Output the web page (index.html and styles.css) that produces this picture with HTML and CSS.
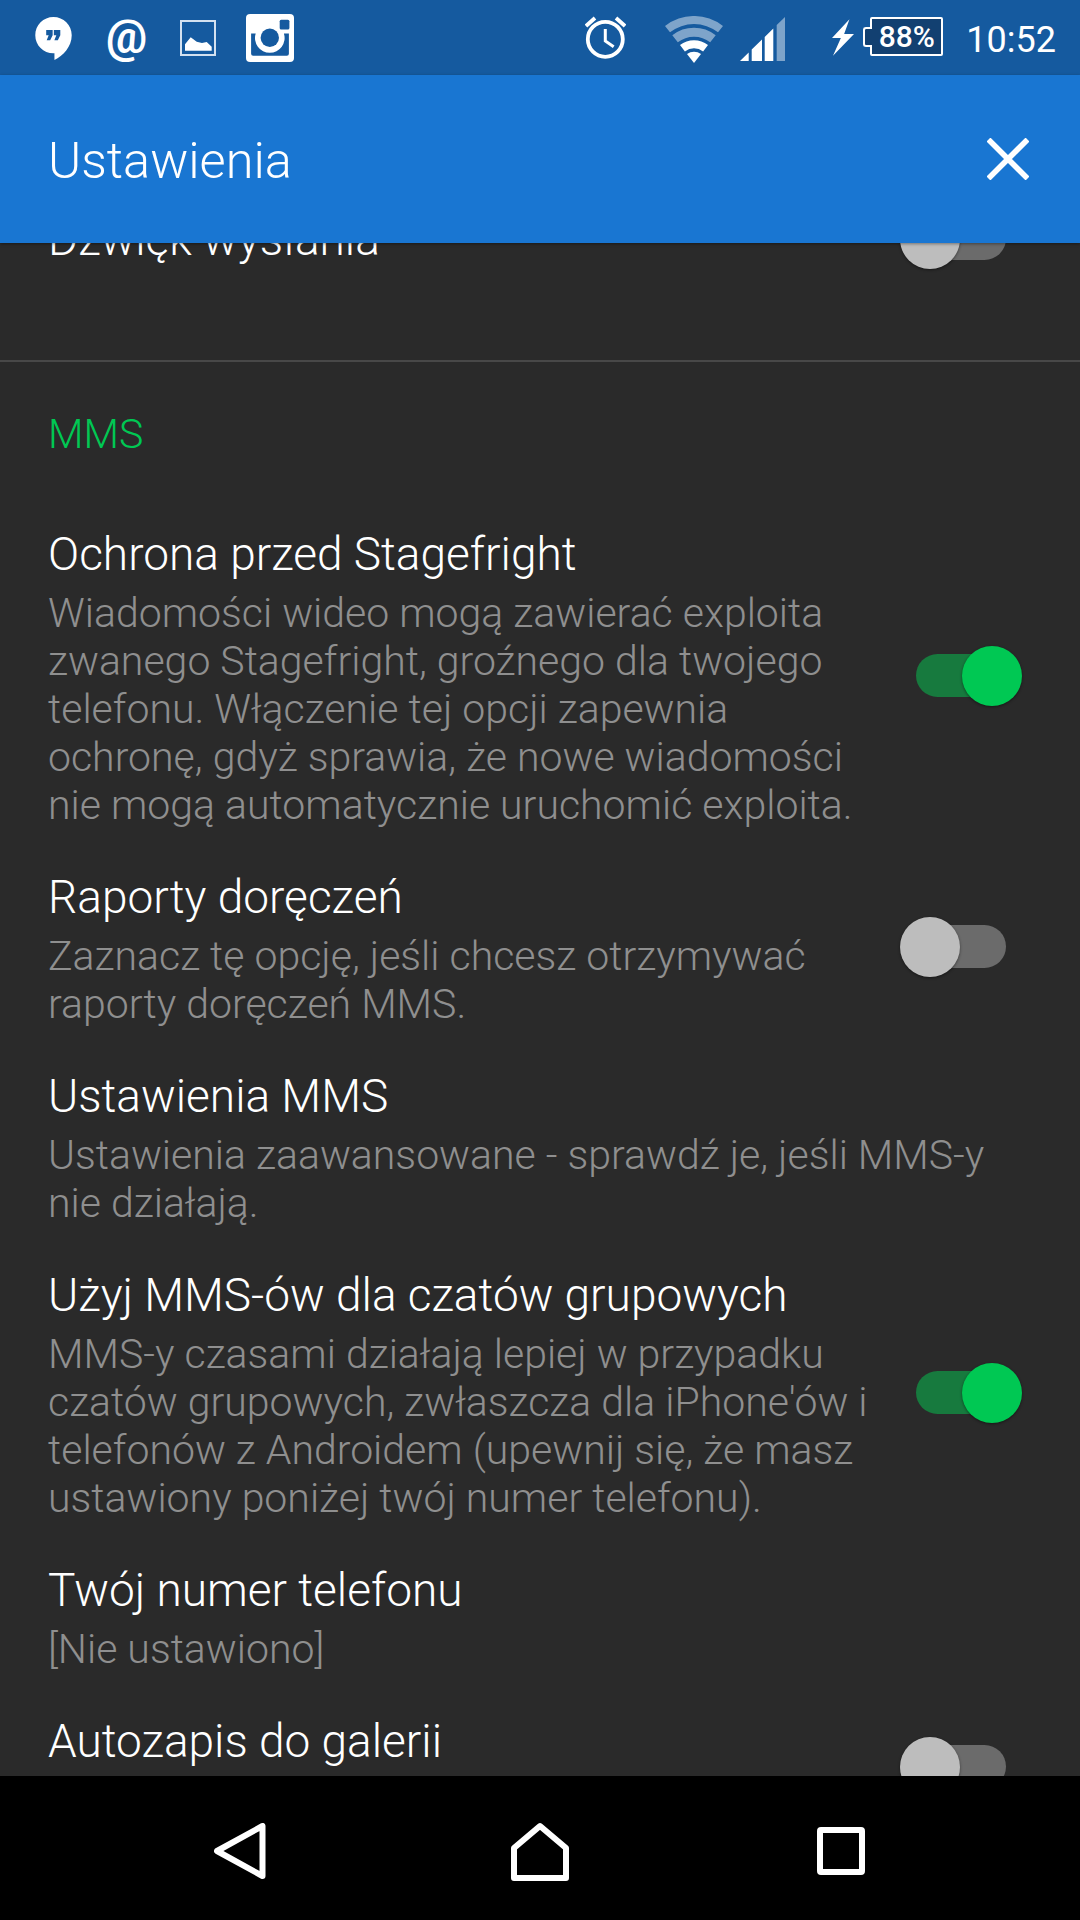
FILE: index.html
```html
<!DOCTYPE html>
<html lang="pl">
<head>
<meta charset="utf-8">
<title>Ustawienia</title>
<link rel="stylesheet" href="styles.css">
</head>
<body>
<div class="screen">
  <header class="status">
    <div class="status-left">
      <svg class="ic-hangouts" viewBox="0 0 36.700 43.300"><path fill="#fff" d="M18.300 0C8.200 0 0 8.200 0 18.300s8.200 18.300 18.300 18.300h1v6.700c8.500-4.200 17.400-13.300 17.400-25C36.700 8.200 28.400 0 18.300 0z"/><path fill="#155a9f" d="M11 13h6.500v5.500l-2.500 5h-3.500l2-5H11zM18.700 13h6.500v5.500l-2.500 5h-3.500l2-5h-2.500z"/></svg>
      <span class="ic-at">@</span>
      <svg class="ic-image" viewBox="0 0 36 36"><rect x="1" y="1" width="34" height="34" fill="none" stroke="#d3e1f0" stroke-width="2"/><path fill="#fff" d="M5 24.300l5.700-7 6 4.400 5.300 1.300 4.700-1 5 4.700v4H5z"/></svg>
      <svg class="ic-insta" viewBox="0 0 47 47"><rect width="47" height="47" rx="4" fill="#fff"/><path fill="#155a9f" d="M5 19H9.500A14.500 14.500 0 1 0 37.100 19H42V39a2 2 0 0 1-2 2H7a2 2 0 0 1-2-2z"/><circle cx="23.300" cy="23.300" r="9" fill="#155a9f"/><rect x="33" y="5.700" width="9.500" height="9.500" rx="1.500" fill="#155a9f"/></svg>
    </div>
    <div class="status-right">
      <svg class="ic-alarm" viewBox="0 0 41 43"><circle cx="20.300" cy="23.300" r="17.500" fill="none" stroke="#fff" stroke-width="3.800"/><path d="M20.300 13v12l8.400 5.700" fill="none" stroke="#fff" stroke-width="3"/><path d="M1 10l9-8M31 2l9 8" stroke="#fff" stroke-width="3.800"/></svg>
      <svg class="ic-wifi" viewBox="0 0 58 47"><g fill="#fff" fill-opacity=".45"><path d="M0 10A47 47 0 0 1 58 10L53 16.300A39 39 0 0 0 5 16.300z"/><path d="M7.300 19.200A35.300 35.300 0 0 1 50.700 19.200L45.200 26.300A26.300 26.300 0 0 0 12.800 26.300z"/></g><path fill="#fff" d="M15 29.100A22.700 22.700 0 0 1 43 29.100L38.100 35.400A14.700 14.700 0 0 0 19.900 35.400z"/><path fill="#fff" d="M22 38.100A11.300 11.300 0 0 1 36 38.100L29 47z"/></svg>
      <svg class="ic-signal" viewBox="0 0 45 44"><path fill="#fff" fill-opacity=".45" d="M36.700 8.100L45 0v44h-8.300z"/><path fill="#fff" d="M0 44l8.700-8.500V44zM11.700 32.600L22 22.500V44H11.700zM24.700 19.900l8.600-8.500V44h-8.600z"/></svg>
      <svg class="ic-bolt" viewBox="0 0 22.300 37"><path fill="#fff" d="M17.700 0L0 19h9L1 37 22.300 15h-10z"/></svg>
      <div class="battery"><span class="battery-cap"></span><span class="battery-body">88%</span></div>
      <span class="clock">10:52</span>
    </div>
  </header>
  <div class="appbar">
    <h1 class="appbar-title">Ustawienia</h1>
    <svg class="ic-close" viewBox="0 0 42 42"><path d="M1.500 1.500l39 39M40.500 1.500l-39 39" stroke="#fff" stroke-width="5.500"/></svg>
  </div>
  <main class="list">
    <div class="row row-clip">
      <div class="row-text"><div class="row-title">Dźwięk wysłania</div></div>
      <div class="toggle"><span class="track"></span><span class="thumb"></span></div>
    </div>
    <div class="divider"></div>
    <div class="section">MMS</div>
    <div class="row row-first">
      <div class="row-text">
        <div class="row-title">Ochrona przed Stagefright</div>
        <div class="row-sub">Wiadomości wideo mogą zawierać exploita<br>zwanego Stagefright, groźnego dla twojego<br>telefonu. Włączenie tej opcji zapewnia<br>ochronę, gdyż sprawia, że nowe wiadomości<br>nie mogą automatycznie uruchomić exploita.</div>
      </div>
      <div class="toggle on"><span class="track"></span><span class="thumb"></span></div>
    </div>
    <div class="row">
      <div class="row-text">
        <div class="row-title">Raporty doręczeń</div>
        <div class="row-sub">Zaznacz tę opcję, jeśli chcesz otrzymywać<br>raporty doręczeń MMS.</div>
      </div>
      <div class="toggle"><span class="track"></span><span class="thumb"></span></div>
    </div>
    <div class="row">
      <div class="row-text">
        <div class="row-title">Ustawienia MMS</div>
        <div class="row-sub">Ustawienia zaawansowane - sprawdź je, jeśli MMS-y<br>nie działają.</div>
      </div>
    </div>
    <div class="row">
      <div class="row-text">
        <div class="row-title">Użyj MMS-ów dla czatów grupowych</div>
        <div class="row-sub">MMS-y czasami działają lepiej w przypadku<br>czatów grupowych, zwłaszcza dla iPhone'ów i<br>telefonów z Androidem (upewnij się, że masz<br>ustawiony poniżej twój numer telefonu).</div>
      </div>
      <div class="toggle on"><span class="track"></span><span class="thumb"></span></div>
    </div>
    <div class="row">
      <div class="row-text">
        <div class="row-title">Twój numer telefonu</div>
        <div class="row-sub">[Nie ustawiono]</div>
      </div>
    </div>
    <div class="row">
      <div class="row-text">
        <div class="row-title">Autozapis do galerii</div>
        <div class="row-sub">&nbsp;</div>
      </div>
      <div class="toggle"><span class="track"></span><span class="thumb"></span></div>
    </div>
  </main>
  <nav class="navbar">
    <svg class="ic-back" viewBox="0 0 52 56"><path d="M48.500 3V53L3 28z" fill="none" stroke="#fff" stroke-width="6" stroke-linejoin="round"/></svg>
    <svg class="ic-home" viewBox="0 0 58 59"><path d="M3 56V26L29 4l26 22v30z" fill="none" stroke="#fff" stroke-width="6" stroke-linejoin="round"/></svg>
    <svg class="ic-recents" viewBox="0 0 48 48"><rect x="3" y="3" width="42" height="42" rx="1" fill="none" stroke="#fff" stroke-width="6"/></svg>
  </nav>
</div>
</body>
</html>
```
FILE: styles.css
```css
* { box-sizing: border-box; }
html, body { margin: 0; padding: 0; }
body { width: 1080px; height: 1920px; overflow: hidden; background: #000; font-family: Roboto, sans-serif; }
.screen { width: 1080px; height: 1920px; display: flex; flex-direction: column; }

.status { height: 75px; flex: none; background: #155a9f; display: flex; justify-content: space-between; align-items: center; color: #fff; }
.status-left, .status-right { display: flex; align-items: center; }
.status-left { padding-left: 35px; }
.status-right { padding-right: 24px; }
.status svg { display: block; flex: none; }
.ic-hangouts { width: 37px; height: 43px; margin-top: 2px; }
.ic-at { width: 39px; margin-left: 34px; margin-bottom: 2px; font-size: 46px; line-height: 44px; font-weight: 700; text-align: center; }
.ic-image { width: 36px; height: 36px; margin-left: 35px; }
.ic-insta { width: 48px; height: 48px; margin-left: 30px; }
.ic-alarm { width: 41px; height: 43px; }
.ic-wifi { width: 58px; height: 47px; margin-left: 39px; margin-top: 4px; }
.ic-signal { width: 45px; height: 44px; margin-left: 17px; margin-top: 3px; }
.ic-bolt { width: 22px; height: 37px; margin-left: 47px; margin-top: -1px; }
.battery { display: flex; align-items: center; margin-left: 9px; height: 39px; margin-top: -2px; }
.battery-cap { width: 9px; height: 20px; border: 2px solid #fff; border-right: 0; border-radius: 3px 0 0 3px; background: #124071; margin-right: -2px; position: relative; z-index: 1; }
.battery-body { width: 73px; height: 39px; border: 2px solid #fff; border-radius: 2px; background: #124071; font-size: 30px; line-height: 35px; font-weight: 500; text-align: center; }
.clock { margin-left: 23px; font-size: 36px; line-height: 40px; margin-top: 4px; }

.appbar { height: 168px; flex: none; background: #1976d2; display: flex; align-items: center; justify-content: space-between; padding: 0 51px 0 48px; position: relative; z-index: 1; box-shadow: 0 1px 3px rgba(0,0,0,.4); }
.appbar-title { margin: 2px 0 0; font-size: 50.500px; font-weight: 300; color: #fff; }
.ic-close { width: 42px; height: 42px; display: block; }

.list { flex: 1; min-height: 0; overflow: hidden; background: #2a2a2a; color: #fff; font-weight: 300; }
.row { display: flex; align-items: center; justify-content: space-between; padding: 0 58px 0 48px; margin-bottom: 40px; }
.row-clip { margin-top: -34px; margin-bottom: 0; height: 60px; }
.row-clip .toggle { margin-bottom: 0; }
.row-title { font-size: 46px; line-height: 56px; }
.row-sub { font-size: 41px; line-height: 48px; color: #8f8f8f; margin-top: 7px; }
.divider { height: 2px; background: #484848; margin-top: 91px; }
.section { font-size: 41px; line-height: 48px; color: #00c853; padding-left: 48px; margin-top: 48px; }
.row-first { margin-top: 68px; }

.toggle { width: 122px; height: 60px; flex: none; position: relative; margin-bottom: 4px; }
.track { position: absolute; left: 16px; top: 8px; width: 90px; height: 43px; border-radius: 22px; background: #6b6b6b; }
.thumb { position: absolute; left: 0; top: 0; width: 60px; height: 60px; border-radius: 50%; background: #bdbdbd; box-shadow: 0 1px 3px rgba(0,0,0,.45); }
.toggle.on .track { background: #177a3e; }
.toggle.on .thumb { left: 62px; background: #00c853; }

.navbar { height: 144px; flex: none; background: #000; display: flex; align-items: center; padding-left: 214px; padding-top: 6px; }
.navbar svg { display: block; flex: none; }
.ic-back { width: 52px; height: 56px; }
.ic-home { width: 58px; height: 59px; margin-left: 245px; }
.ic-recents { width: 48px; height: 48px; margin-left: 248px; }
```
